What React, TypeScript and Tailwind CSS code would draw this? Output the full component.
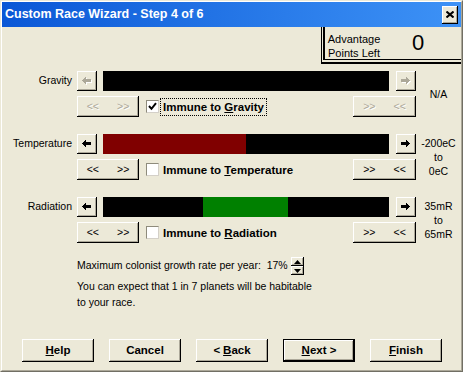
import React from 'react'

const raised =
  'bg-[#ece9d8] shadow-[inset_-1px_-1px_0_#000,inset_1px_1px_0_#fff,inset_-2px_-2px_0_#aca899]'

function Arrow({ dir, disabled }: { dir: 'left' | 'right'; disabled?: boolean }) {
  const pts = dir === 'left' ? '0,3.5 4,-0.5 4,2 9,2 9,5 4,5 4,7.5' : '9,3.5 5,-0.5 5,2 0,2 0,5 5,5 5,7.5'
  return (
    <button className={`w-[20px] h-[20px] flex items-center justify-center ${raised}`}>
      <svg width="11" height="9" viewBox="0 0 11 9" shapeRendering="crispEdges">
        {disabled && <polygon points={pts} fill="#fff" transform="translate(1,1)" />}
        <polygon points={pts} fill={disabled ? '#aca899' : '#000'} />
      </svg>
    </button>
  )
}

function Squeeze({ reverse, disabled }: { reverse?: boolean; disabled?: boolean }) {
  const tone = disabled ? 'text-[#aca899] [text-shadow:1px_1px_0_#fff]' : 'text-black'
  return (
    <button className={`w-full h-[21px] flex items-center justify-center gap-[18px] text-[10.5px] ${tone} ${raised}`}>
      <span>{reverse ? '>>' : '<<'}</span>
      <span>{reverse ? '<<' : '>>'}</span>
    </button>
  )
}

function Check({ checked }: { checked?: boolean }) {
  return (
    <span className="w-[13px] h-[13px] bg-white border border-t-[#8e8b7c] border-l-[#8e8b7c] border-r-[#d4d0c8] border-b-[#d4d0c8] flex items-center justify-center">
      {checked && (
        <svg width="9" height="9" viewBox="0 0 9 9">
          <path d="M1 4 L3.5 6.8 L8 1.2" stroke="#000" strokeWidth="2" fill="none" />
        </svg>
      )}
    </span>
  )
}

function Group({
  label,
  pre,
  key_,
  post,
  fill,
  disabled,
  checked,
  focus,
  value,
}: {
  label: string
  pre: string
  key_: string
  post: string
  fill?: React.ReactNode
  disabled?: boolean
  checked?: boolean
  focus?: boolean
  value: React.ReactNode
}) {
  return (
    <div className="flex items-center">
      <div className="w-[414px] flex flex-col gap-[5px]">
        <div className="flex items-center h-[20px]">
          <span className="w-[70px] text-right">{label}</span>
          <div className="ml-[5px]">
            <Arrow dir="left" disabled={disabled} />
          </div>
          <div className="ml-[6px] w-[286px] h-[20px] bg-black flex">{fill}</div>
          <div className="ml-[7px]">
            <Arrow dir="right" disabled={disabled} />
          </div>
        </div>
        <div className="flex items-center h-[21px] pl-[75px]">
          <div className="w-[62px]">
            <Squeeze disabled={disabled} />
          </div>
          <div className="ml-[7px]">
            <Check checked={checked} />
          </div>
          <span
            className={`ml-[1px] px-[2px] py-[1px] font-bold text-[11.5px] leading-[14px] border border-dotted ${focus ? 'border-black' : 'border-transparent'}`}
          >
            {pre}
            <span className="underline">{key_}</span>
            {post}
          </span>
          <div className="ml-auto w-[63px]">
            <Squeeze reverse disabled={disabled} />
          </div>
        </div>
      </div>
      <div className="flex-1 text-center leading-[14px]">{value}</div>
    </div>
  )
}

function DlgButton({ children, def }: { children: React.ReactNode; def?: boolean }) {
  return (
    <button
      className={`w-[72px] h-[23px] flex items-center justify-center font-bold text-[11.5px] ${def ? 'border border-black' : ''} ${raised}`}
    >
      {children}
    </button>
  )
}

export default function App() {
  return (
    <div className="w-[463px] h-[372px] border border-t-[#ece9d8] border-l-[#ece9d8] border-r-[#716f64] border-b-[#716f64] font-['Liberation_Sans',Arial,sans-serif] text-[10.5px] text-black">
      <div className="h-full flex flex-col bg-[#ece9d8] border border-t-white border-l-white border-r-[#aca899] border-b-[#aca899]">
        {/* Title bar */}
        <div className="h-[25px] flex items-center justify-between bg-gradient-to-r from-[#0a57d6] to-[#3d92f6] pl-[3px] pr-[3px]">
          <span className="text-white font-bold text-[12.5px]">Custom Race Wizard - Step 4 of 6</span>
          <button className={`w-[16px] h-[18px] flex items-center justify-center ${raised}`}>
            <svg width="8" height="7" viewBox="0 0 8 7">
              <path d="M0.5 0.5 L7.5 6.5 M7.5 0.5 L0.5 6.5" stroke="#000" strokeWidth="2" />
            </svg>
          </button>
        </div>

        {/* Advantage points */}
        <div className="flex justify-end">
          <div className="w-[140px] h-[37px] border-l border-b-2 border-black pl-px pb-[2px]">
            <div className="h-full border-l-2 border-b border-black flex">
              <div className="w-[58px] pt-[5px] text-center text-[11px] leading-[14px]">
                Advantage
                <br />
                Points Left
              </div>
              <div className="flex-1 pr-[8px] pt-[5px] text-center text-[22px] leading-[22px]">0</div>
            </div>
          </div>
        </div>

        {/* Habitability settings */}
        <div className="mt-[7px] flex flex-col gap-[17px]">
          <Group
            label="Gravity"
            pre="Immune to "
            key_="G"
            post="ravity"
            disabled
            checked
            focus
            value="N/A"
          />
          <Group
            label="Temperature"
            pre="Immune to "
            key_="T"
            post="emperature"
            fill={<div className="w-[143px] h-full bg-[#800000]" />}
            value={
              <>
                -200eC
                <br />
                to
                <br />
                0eC
              </>
            }
          />
          <Group
            label="Radiation"
            pre="Immune to "
            key_="R"
            post="adiation"
            fill={<div className="ml-[100px] w-[85px] h-full bg-[#008000]" />}
            value={
              <>
                35mR
                <br />
                to
                <br />
                65mR
              </>
            }
          />
        </div>

        {/* Growth rate */}
        <div className="mt-[14px] pl-[75px] flex items-center h-[18px]">
          <span>Maximum colonist growth rate per year:&nbsp;&nbsp;17%</span>
          <div className="ml-[3px] w-[13px] h-[18px] flex flex-col">
            <button className={`h-[9px] flex items-center justify-center ${raised}`}>
              <svg width="7" height="4" viewBox="0 0 7 4">
                <path d="M3.5 0 L7 4 H0 Z" fill="#000" />
              </svg>
            </button>
            <button className={`h-[9px] flex items-center justify-center ${raised}`}>
              <svg width="7" height="4" viewBox="0 0 7 4">
                <path d="M0 0 H7 L3.5 4 Z" fill="#000" />
              </svg>
            </button>
          </div>
        </div>
        <p className="mt-[3px] pl-[75px] leading-[16px]">
          You can expect that 1 in 7 planets will be habitable
          <br />
          to your race.
        </p>

        {/* Dialog buttons */}
        <div className="mt-auto mb-[8px] pl-[20px] flex gap-[15px]">
          <DlgButton>
            <span className="underline">H</span>elp
          </DlgButton>
          <DlgButton>Cancel</DlgButton>
          <DlgButton>
            &lt; <span className="underline ml-[3px]">B</span>ack
          </DlgButton>
          <DlgButton def>
            <span className="underline">N</span>ext&nbsp;&gt;
          </DlgButton>
          <DlgButton>
            <span className="underline">F</span>inish
          </DlgButton>
        </div>
      </div>
    </div>
  )
}
